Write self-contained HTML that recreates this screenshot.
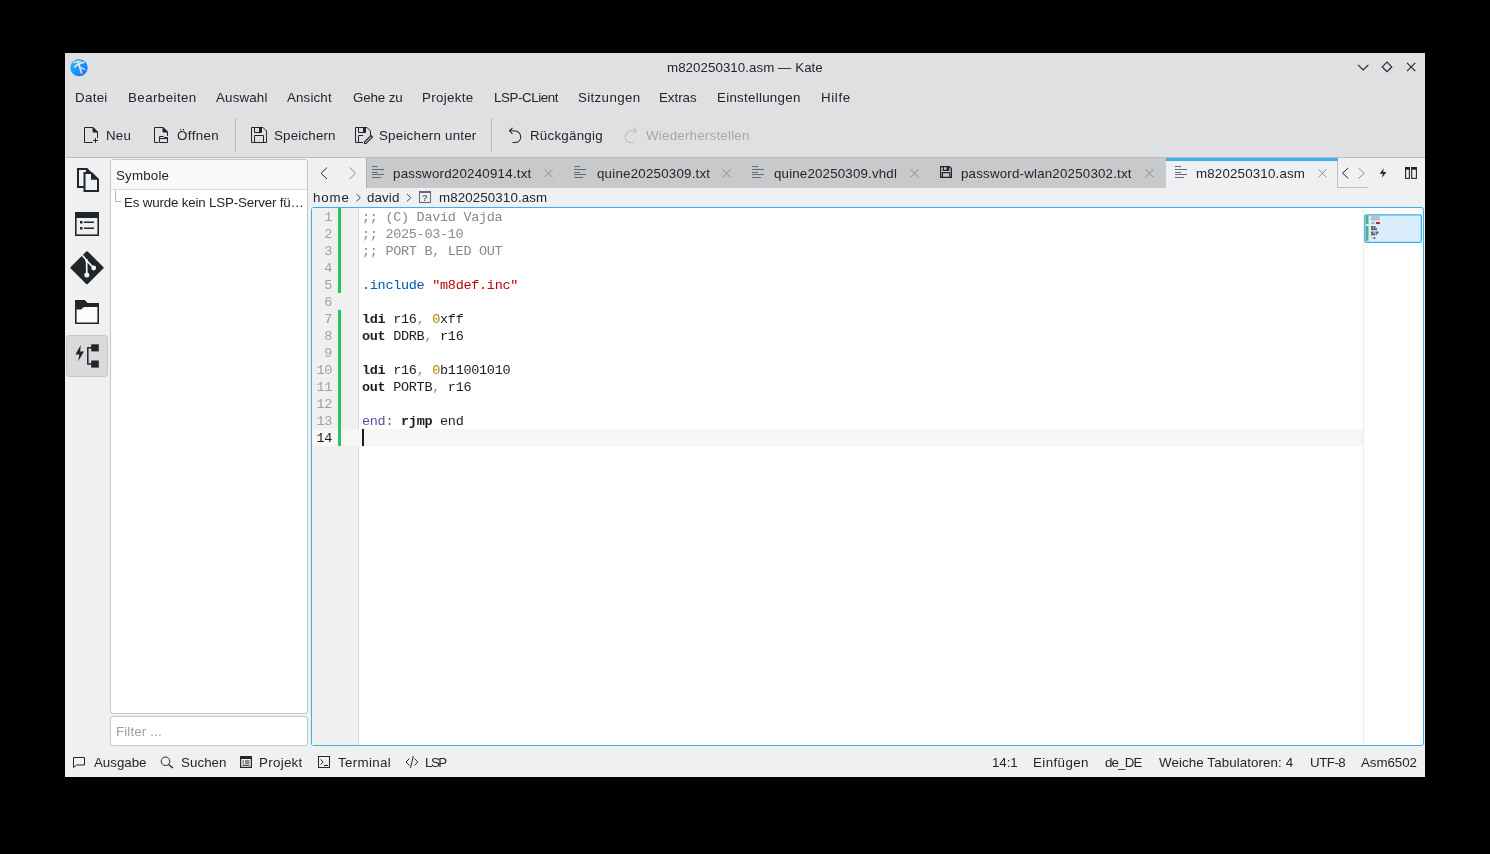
<!DOCTYPE html>
<html><head><meta charset="utf-8">
<style>
html,body{margin:0;padding:0;background:#000;width:1490px;height:854px;overflow:hidden}
*{box-sizing:border-box}
.a{position:absolute}
.t{position:absolute;white-space:nowrap;font-family:"Liberation Sans",sans-serif;font-size:13.33px;line-height:18px;color:#232629;will-change:transform}
.m{position:absolute;white-space:pre;font-family:"Liberation Mono",monospace;font-size:13.5px;letter-spacing:-0.3px;line-height:17px;color:#1f1c1b;will-change:transform}
svg{position:absolute;overflow:visible}
</style></head><body>
<!-- window -->
<div class="a" id="win" style="left:65px;top:53px;width:1360px;height:724px;background:#eff0f1"></div>
<!-- header area -->
<div class="a" style="left:65px;top:53px;width:1360px;height:104px;background:#dee0e2"></div>
<div class="a" style="left:65px;top:157px;width:1360px;height:1px;background:#bcbec0"></div>

<!-- title -->
<div class="t" style="left:667.1px;letter-spacing:0.045px;top:59px">m820250310.asm — Kate</div>

<!-- menu -->
<div class="t" style="left:75.0px;letter-spacing:0.300px;top:89px">Datei</div>
<div class="t" style="left:127.8px;letter-spacing:0.423px;top:89px">Bearbeiten</div>
<div class="t" style="left:216.3px;letter-spacing:0.167px;top:89px">Auswahl</div>
<div class="t" style="left:287.4px;letter-spacing:0.150px;top:89px">Ansicht</div>
<div class="t" style="left:353.0px;letter-spacing:-0.133px;top:89px">Gehe zu</div>
<div class="t" style="left:422.4px;letter-spacing:0.314px;top:89px">Projekte</div>
<div class="t" style="left:494.0px;letter-spacing:-0.423px;top:89px">LSP-CLient</div>
<div class="t" style="left:577.7px;letter-spacing:0.350px;top:89px">Sitzungen</div>
<div class="t" style="left:659.2px;letter-spacing:-0.040px;top:89px">Extras</div>
<div class="t" style="left:716.9px;letter-spacing:0.274px;top:89px">Einstellungen</div>
<div class="t" style="left:821.1px;letter-spacing:0.625px;top:89px">Hilfe</div>

<!-- toolbar -->
<div class="t" style="left:106.1px;letter-spacing:0.200px;top:127px">Neu</div>
<div class="t" style="left:176.8px;letter-spacing:0.400px;top:127px">Öffnen</div>
<div class="a" style="left:235px;top:118px;width:1px;height:34px;background:#b9bbbd"></div>
<div class="t" style="left:273.5px;letter-spacing:0.189px;top:127px">Speichern</div>
<div class="t" style="left:378.5px;letter-spacing:0.229px;top:127px">Speichern unter</div>
<div class="a" style="left:491px;top:118px;width:1px;height:34px;background:#b9bbbd"></div>
<div class="t" style="left:529.6px;letter-spacing:0.244px;top:127px">Rückgängig</div>
<div class="t" style="left:646.2px;letter-spacing:0.226px;top:127px;color:#a5a7a9">Wiederherstellen</div>

<!-- left sidebar / symbol panel -->
<div class="a" style="left:110px;top:159px;width:198px;height:555px;background:#fff;border:1px solid #c5c6c7;border-radius:3px"></div>
<div class="a" style="left:111px;top:160px;width:196px;height:30px;background:#f9f9f9;border-bottom:1px solid #dcdcdc;border-radius:2px 2px 0 0"></div>
<div class="t" style="left:116.2px;letter-spacing:0.184px;top:167px">Symbole</div>
<div class="t" style="left:123.5px;letter-spacing:-0.170px;top:194px">Es wurde kein LSP-Server fü…</div>
<div class="a" style="left:110px;top:716px;width:198px;height:30px;background:#fff;border:1px solid #c5c6c7;border-radius:3px"></div>
<div class="t" style="left:116.2px;letter-spacing:0.132px;top:723px;color:#9c9fa2">Filter ...</div>

<!-- tab bar -->
<div class="a" style="left:366px;top:158px;width:800px;height:30px;background:#c8c9cb;border-left:1px solid #a9abad"></div>
<div class="a" style="left:1166px;top:158px;width:172px;height:30px;background:#eff0f1"></div>
<div class="a" style="left:1166px;top:158px;width:172px;height:3px;background:#3daee9"></div>

<div class="t" style="left:393.2px;letter-spacing:0.221px;top:165px">password20240914.txt</div>
<div class="t" style="left:596.6px;letter-spacing:0.212px;top:165px">quine20250309.txt</div>
<div class="t" style="left:774.2px;letter-spacing:0.164px;top:165px">quine20250309.vhdl</div>
<div class="t" style="left:960.9px;letter-spacing:0.191px;top:165px">password-wlan20250302.txt</div>
<div class="t" style="left:1196.2px;letter-spacing:0.170px;top:165px">m820250310.asm</div>

<!-- breadcrumb -->
<div class="t" style="left:312.5px;letter-spacing:0.834px;top:189px">home</div>
<div class="t" style="left:367.1px;letter-spacing:0.125px;top:189px">david</div>
<div class="t" style="left:438.6px;letter-spacing:0.109px;top:189px">m820250310.asm</div>

<!-- editor frame -->
<div class="a" style="left:311px;top:207px;width:1113px;height:539px;background:#fff;border:1px solid #3daee9;border-radius:3px"></div>
<div class="a" style="left:312px;top:208px;width:47px;height:537px;background:#f0f0f0;border-right:1px solid #d8d8d8"></div>
<div class="a" style="left:312px;top:429px;width:1051px;height:17px;background:#f7f6f5"></div>
<div class="a" style="left:1363px;top:208px;width:1px;height:537px;background:#ececec"></div>


<!-- gutter -->
<div class="a" style="left:338px;top:208px;width:3px;height:85px;background:#27c45f"></div>
<div class="a" style="left:338px;top:310px;width:3px;height:136px;background:#27c45f"></div>
<div class="m" style="left:312px;top:209px;width:20px;text-align:right;color:#a0a0a0">1
2
3
4
5
6
7
8
9
10
11
12
13
<span style="color:#1f1c1b">14</span></div>
<div class="m" style="left:362px;top:209px"><span style="color:#898887">;; (C) David Vajda
;; 2025-03-10
;; PORT B, LED OUT</span>

<span style="color:#0057ae">.include</span> <span style="color:#bf0303">"m8def.inc"</span>

<b>ldi</b> r16<span style="color:#ca60ca">,</span> <span style="color:#b08000">0</span>xff
<b>out</b> DDRB<span style="color:#ca60ca">,</span> r16

<b>ldi</b> r16<span style="color:#ca60ca">,</span> <span style="color:#b08000">0</span>b11001010
<b>out</b> PORTB<span style="color:#ca60ca">,</span> r16

<span style="color:#644a9b">end:</span> <b>rjmp</b> end
</div>
<div class="a" style="left:362px;top:429px;width:2px;height:17px;background:#1f1c1b"></div>

<!-- status bar -->
<div class="t" style="left:94.1px;letter-spacing:-0.017px;top:754px">Ausgabe</div>
<div class="t" style="left:180.6px;letter-spacing:0.060px;top:754px">Suchen</div>
<div class="t" style="left:259.2px;letter-spacing:0.300px;top:754px">Projekt</div>
<div class="t" style="left:338.4px;letter-spacing:0.343px;top:754px">Terminal</div>
<div class="t" style="left:425.0px;letter-spacing:-1.500px;top:754px">LSP</div>
<div class="t" style="left:992.3px;letter-spacing:-0.067px;top:754px">14:1</div>
<div class="t" style="left:1033.4px;letter-spacing:0.400px;top:754px">Einfügen</div>
<div class="t" style="left:1105.3px;letter-spacing:-0.850px;top:754px">de_DE</div>
<div class="t" style="left:1159.2px;letter-spacing:0.100px;top:754px">Weiche Tabulatoren: 4</div>
<div class="t" style="left:1309.6px;letter-spacing:-0.500px;top:754px">UTF-8</div>
<div class="t" style="left:1360.8px;letter-spacing:-0.050px;top:754px">Asm6502</div>


<svg width="1490" height="854" style="left:0;top:0" viewBox="0 0 1490 854">
<defs>
<linearGradient id="kg" x1="0" y1="0" x2="1" y2="1"><stop offset="0" stop-color="#1ec0fb"/><stop offset="1" stop-color="#1a6cf4"/></linearGradient>
</defs>
<!-- kate icon -->
<circle cx="79" cy="67.6" r="8.7" fill="url(#kg)"/>
<g fill="none" stroke="#e4e4e6" stroke-linecap="round">
<path d="M73.6,62.6 Q77,61.3 80.3,61.2" stroke-width="1.5"/>
<path d="M74.8,67 Q77.5,63.6 83.8,62.4" stroke-width="1.9"/>
<path d="M77.9,61.6 Q79,65 79.8,67.5 Q80.8,70.5 81.4,72.8" stroke-width="1.7"/>
<path d="M80,67 L84.8,69.5" stroke-width="1.4"/>
</g>
<!-- window buttons -->
<g fill="none" stroke="#232629" stroke-width="1.15">
<path d="M1358,64.8 L1363.2,70 L1368.4,64.8"/>
<path d="M1387,62.1 L1391.8,66.9 L1387,71.7 L1382.2,66.9 Z"/>
<path d="M1407,62.8 L1415.3,71.1 M1415.3,62.8 L1407,71.1"/>
</g>
<!-- toolbar icons -->
<g fill="none" stroke="#232629" stroke-width="1">
<!-- Neu -->
<path d="M92.5,142.5 H84.5 V127.5 H93 L97.5,132 V138"/>
<path d="M93,127.5 L97.5,132 H93 Z" fill="#232629"/>
<path d="M93,140.5 H98 M95.5,138 V143"/>
<!-- Oeffnen -->
<path d="M158.5,142.5 H154.5 V127.5 H163 L167.5,132 V136"/>
<path d="M163,127.5 L167.5,132 H163 Z" fill="#232629"/>
<path d="M159.5,142.5 V136.5 H163.5 L164.5,137.5 H167.5 V142.5 Z"/>
<path d="M160,138 H167 V139 H160 Z" fill="#232629" stroke="none"/>
<!-- Speichern -->
<path d="M251.5,127.5 H263 L266.5,131 V142.5 H251.5 Z"/>
<path d="M254.5,127.5 V132.5 H261.5 V127.5"/>
<path d="M259,128 H261 V132 H259 Z" fill="#232629" stroke="none"/>
<path d="M254.5,142.5 V135.5 H263.5 V142.5"/>
<!-- Speichern unter -->
<path d="M363,142.5 H355.5 V127.5 H367 L370.5,131 V136"/>
<path d="M358.5,127.5 V132.5 H365.5 V127.5"/>
<path d="M363,128 H365 V132 H363 Z" fill="#232629" stroke="none"/>
<path d="M358.5,142.5 V135.5 H363"/>
<path d="M364.5,142 L371,135.5 L372.5,137 L366,143.5 H364.5 Z" stroke-width="1.1"/>
<!-- undo -->
<path d="M512.5,127.8 L509.5,130.8 L512.5,133.8" stroke-width="1.1"/>
<path d="M509.8,130.8 H514 C518,130.8 520.8,133.5 520.8,137 C520.8,140.3 518,142.5 514.5,142.5 H512.5" stroke-width="1.1"/>
</g>
<g fill="none" stroke="#bbbdbf" stroke-width="1.1">
<path d="M633.5,127.8 L636.5,130.8 L633.5,133.8"/>
<path d="M636.2,130.8 H632 C628,130.8 625.2,133.5 625.2,137 C625.2,140.3 628,142.5 631.5,142.5 H633.5"/>
</g>
<path d="M372,166.5 H378 M372,169.5 H384 M372,172.5 H378 M372,174.5 H384 M372,177.5 H381" stroke="#5e6c7b" stroke-width="1" fill="none"/>
<path d="M574,166.5 H580 M574,169.5 H586 M574,172.5 H580 M574,174.5 H586 M574,177.5 H583" stroke="#5e6c7b" stroke-width="1" fill="none"/>
<path d="M752,166.5 H758 M752,169.5 H764 M752,172.5 H758 M752,174.5 H764 M752,177.5 H761" stroke="#5e6c7b" stroke-width="1" fill="none"/>
<path d="M1175,166.5 H1181 M1175,169.5 H1187 M1175,172.5 H1181 M1175,174.5 H1187 M1175,177.5 H1184" stroke="#5e6c7b" stroke-width="1" fill="none"/>
<path d="M544.5,169.3 L552.5,177.3 M552.5,169.3 L544.5,177.3" stroke="#8b8d90" stroke-width="1" fill="none"/>
<path d="M722.5,169.3 L730.5,177.3 M730.5,169.3 L722.5,177.3" stroke="#8b8d90" stroke-width="1" fill="none"/>
<path d="M910.5,169.3 L918.5,177.3 M918.5,169.3 L910.5,177.3" stroke="#8b8d90" stroke-width="1" fill="none"/>
<path d="M1145.5,169.3 L1153.5,177.3 M1153.5,169.3 L1145.5,177.3" stroke="#8b8d90" stroke-width="1" fill="none"/>
<path d="M1318.5,169.3 L1326.5,177.3 M1326.5,169.3 L1318.5,177.3" stroke="#8b8d90" stroke-width="1" fill="none"/>
<g fill="none" stroke="#232629" stroke-width="1.2"><path d="M940.6,166.6 H949.5 L951.4,168.5 V177.4 H940.6 Z"/><path d="M943.3,166.6 V170.3 H948.8 V166.6"/><path d="M942.4,177.4 V172.6 H949.8 V177.4"/></g><rect x="946.5" y="167" width="2" height="3" fill="#232629"/>
<path d="M327,167.5 L321,173.3 L327,179" stroke="#232629" stroke-width="1" fill="none"/>
<path d="M349.5,167.5 L355.5,173.3 L349.5,179" stroke="#8e9092" stroke-width="1" fill="none"/>
<path d="M1348.3,168 L1342.5,173.2 L1348.3,178.4" stroke="#232629" stroke-width="1" fill="none"/>
<path d="M1358.5,168 L1364.3,173.2 L1358.5,178.4" stroke="#8e9092" stroke-width="1" fill="none"/>
<path d="M1383.8,168.2 L1379.6,173.8 H1382.8 L1382,177.8 L1386.4,172.1 H1383.1 Z" fill="#232629"/>
<g fill="none" stroke="#232629" stroke-width="1.1"><rect x="1405.6" y="167.6" width="3.8" height="10.8"/><rect x="1411.7" y="167.6" width="4.7" height="10.8"/></g><rect x="1405" y="167" width="5" height="2.7" fill="#232629"/><rect x="1411.1" y="167" width="5.9" height="2.7" fill="#232629"/>
<path d="M1337.5,161 V187.5 H1368.5" stroke="#bcbec0" stroke-width="1" fill="none"/>
<path d="M356.5,194 L360.3,197.7 L356.5,201.4 M407,194 L410.8,197.7 L407,201.4" stroke="#3b3f43" stroke-width="1" fill="none"/>
<rect x="419.5" y="191.5" width="11" height="11" fill="none" stroke="#5b6b7b" stroke-width="1"/><rect x="419" y="191" width="12" height="2" fill="#5b6b7b"/>
<text x="425" y="201.3" font-family="Liberation Sans" font-size="9.5" font-weight="bold" fill="#5b6b7b" text-anchor="middle">?</text>
<g fill="none" stroke="#232629" stroke-width="2"><path d="M84,187 H78 V169 H86.5 L90.5,173"/><path d="M84.5,191 V173 H91.5 L98,179.5 V191 Z"/></g><path d="M86,168 H87 L91.5,172.5 H86 Z M91,172 L98.8,179.8 H91 Z" fill="#232629"/>
<rect x="75.8" y="212.8" width="22.4" height="22.4" fill="none" stroke="#232629" stroke-width="1.6"/><rect x="75" y="212" width="24" height="6" fill="#232629"/><rect x="80" y="221" width="2.5" height="2.5" fill="#232629"/><rect x="80" y="227" width="2.5" height="2.5" fill="#232629"/><path d="M84,222.3 H94 M84,228.3 H94" stroke="#232629" stroke-width="1.6"/>
<path d="M87,252.3 L102.5,267.8 L87,283.3 L71.5,267.8 Z" fill="#232629" stroke="#232629" stroke-width="2.2" stroke-linejoin="round"/>
<g stroke="#f5f5f5" stroke-width="1.7" fill="none"><path d="M82.3,255.3 L86.6,260.3 L86.8,274.5 M86.6,260.6 L93.6,267.8"/></g><circle cx="86.8" cy="275" r="2.5" fill="#f5f5f5"/><circle cx="93.7" cy="268" r="2.4" fill="#f5f5f5"/><circle cx="86.5" cy="260.5" r="1.4" fill="#f5f5f5"/>
<path d="M75.8,300.8 H84 L87,303.8 H98.2 V323.2 H75.8 Z" fill="#fcfcfc" stroke="#232629" stroke-width="1.6"/><path d="M75,300 H84.5 L87.5,303 H99 V307 H84 L81,309.5 H75 Z" fill="#232629"/>
<rect x="66.5" y="335.5" width="41" height="41" rx="3" fill="#d9dadc" stroke="#c6c7c9" stroke-width="1"/>
<path d="M80.8,345 L75.4,354.5 H79.3 L78.2,361.2 L84,351.5 H80.2 Z" fill="#232629"/>
<rect x="91.2" y="344.3" width="7.6" height="7.1" fill="#232629"/><rect x="91.2" y="360.5" width="7.6" height="7.1" fill="#232629"/><path d="M92,347.8 H87.8 V364 H92" stroke="#232629" stroke-width="1.5" fill="none"/>
<path d="M73.5,757.5 H84.5 V765 H76.5 L73.5,767.5 Z" fill="none" stroke="#232629" stroke-width="1"/>
<circle cx="165.5" cy="761.3" r="4.3" fill="none" stroke="#232629" stroke-width="1"/><path d="M168.5,764.5 L173,768" stroke="#232629" stroke-width="1.2"/>
<rect x="240.6" y="756.6" width="10.8" height="10.8" fill="none" stroke="#232629" stroke-width="1.2"/><rect x="240" y="756" width="12" height="3" fill="#232629"/><path d="M242.5,761 H244 M245,761 H249.5 M242.5,763 H244 M245,763 H249.5 M242.5,765.2 H249.5" stroke="#232629" stroke-width="1.1"/>
<rect x="318.5" y="756.5" width="11" height="11" fill="none" stroke="#232629" stroke-width="1"/><path d="M320.5,759.5 L323.2,762 L320.5,764.5 M324,765.5 H328" stroke="#232629" stroke-width="1" fill="none"/>
<path d="M409.5,758.5 L406,762 L409.5,765.5 M414.3,758.5 L417.8,762 L414.3,765.5 M413.3,756 L410.5,768" stroke="#232629" stroke-width="1" fill="none"/>
<rect x="1364.8" y="214.8" width="56.6" height="27.6" rx="1.5" fill="#d9edfa" stroke="#3daee9" stroke-width="1.3"/>
<rect x="1365.8" y="215.5" width="2.7" height="8.5" fill="#5aaa84"/><rect x="1365.8" y="226" width="2.7" height="14.8" fill="#5aaa84"/>
<rect x="1371" y="215.3" width="8.8" height="5.3" fill="#b3c1cc"/><rect x="1371" y="222" width="3.8" height="2" fill="#8fbfe4"/><rect x="1376" y="222" width="4" height="2" fill="#c0282e"/>
<rect x="1371" y="226" width="2.5" height="2" fill="#555a5f"/><rect x="1374" y="226" width="1.5" height="2" fill="#555a5f"/><rect x="1371" y="228.3" width="6" height="1.8" fill="#555a5f"/><rect x="1371" y="231.5" width="2.5" height="2" fill="#555a5f"/><rect x="1374" y="231.5" width="1" height="1" fill="#8a6fb0"/><rect x="1375.5" y="231.5" width="3" height="2" fill="#555a5f"/><rect x="1371" y="233.5" width="4" height="1.8" fill="#555a5f"/><rect x="1375.5" y="233.5" width="1.5" height="1.8" fill="#777"/><rect x="1371" y="237.2" width="1.8" height="1.8" fill="#c8c8e8"/><rect x="1373.5" y="237.2" width="1.8" height="1.8" fill="#555a5f"/>
<path d="M115.5,190.5 V201.5 H121" stroke="#b4b5b6" stroke-width="1" fill="none"/>
</svg>

</body></html>
